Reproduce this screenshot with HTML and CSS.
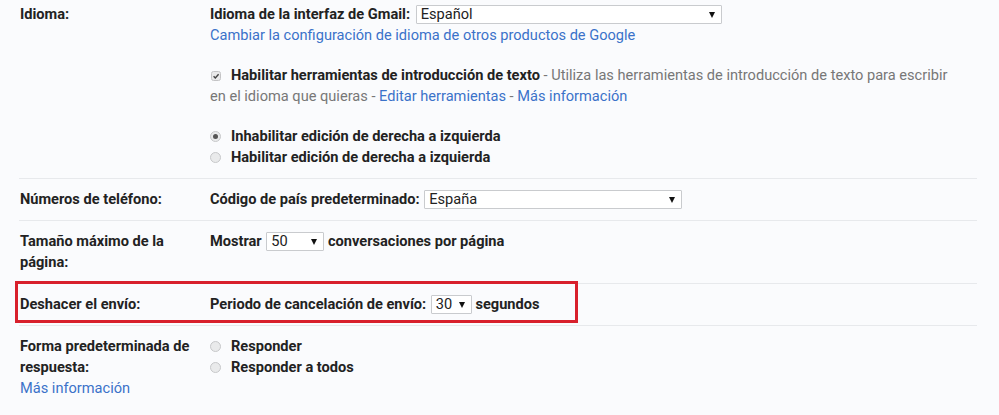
FILE: index.html
```
<!DOCTYPE html>
<html lang="es">
<head>
<meta charset="utf-8">
<title>Configuración</title>
<link rel="stylesheet" href="styles.css">
</head>
<body>
<div class="settings">
  <div class="row row-first">
    <div class="label">Idioma:</div>
    <div class="content">
      <div class="line"><b>Idioma de la interfaz de Gmail:</b> <span class="select select-lang">Español</span></div>
      <div class="line"><a href="#">Cambiar la configuración de idioma de otros productos de Google</a></div>
      <div class="block">
        <span class="check"><svg width="10" height="10" viewBox="0 0 10 10"><rect x="0.5" y="0.5" width="9" height="9" rx="2" fill="#e9e9ea" stroke="#c4c4c6"/><path d="M2.6 5.2 L4.3 6.9 L7.6 3.2" fill="none" stroke="#444" stroke-width="1.4"/></svg></span><b>Habilitar herramientas de introducción de texto</b><span class="muted"> - Utiliza las herramientas de introducción de texto para escribir en el idioma que quieras - </span><a href="#">Editar herramientas</a><span class="muted"> - </span><a href="#">Más información</a>
      </div>
      <div class="block">
        <div class="line"><span class="radio radio-on"></span><b>Inhabilitar edición de derecha a izquierda</b></div>
        <div class="line"><span class="radio"></span><b>Habilitar edición de derecha a izquierda</b></div>
      </div>
    </div>
  </div>
  <div class="row">
    <div class="label">Números de teléfono:</div>
    <div class="content">
      <div class="line"><b>Código de país predeterminado:</b> <span class="select select-country">España</span></div>
    </div>
  </div>
  <div class="row">
    <div class="label">Tamaño máximo de la página:</div>
    <div class="content">
      <div class="line"><b>Mostrar</b> <span class="select select-size">50</span> <b>conversaciones por página</b></div>
    </div>
  </div>
  <div class="row">
    <div class="label">Deshacer el envío:</div>
    <div class="content">
      <div class="line"><b>Periodo de cancelación de envío:</b> <span class="select select-undo">30</span> <b>segundos</b></div>
    </div>
    <div class="highlight"></div>
  </div>
  <div class="row row-last">
    <div class="label">Forma predeterminada de respuesta:<br><a href="#" class="label-link">Más información</a></div>
    <div class="content">
      <div class="line"><span class="radio"></span><b>Responder</b></div>
      <div class="line"><span class="radio"></span><b>Responder a todos</b></div>
    </div>
  </div>
</div>
</body>
</html>
```
FILE: styles.css
```
html, body {
  margin: 0;
  padding: 0;
  background: #fafbfd;
}
body {
  font-family: Roboto, "Liberation Sans", Arial, sans-serif;
  font-size: 14.6px;
  line-height: 21px;
  color: #222;
}
.settings {
  margin-left: 19px;
  width: 958px;
}
.row {
  display: flex;
  padding: 10px 0;
  border-bottom: 1px solid #e7e9ec;
  position: relative;
}
.row-first {
  padding-top: 4px;
}
.row-last {
  border-bottom: none;
}
.label {
  width: 178px;
  flex: none;
  padding-left: 1px;
  padding-right: 12px;
  font-weight: bold;
}
.label-link {
  font-weight: normal;
}
.content {
  flex: 1;
  padding-right: 18px;
}
b {
  font-weight: bold;
}
a {
  color: #3b72c9;
  text-decoration: none;
}
.muted {
  color: #777;
}
.block {
  margin-top: 19px;
}
.select {
  display: inline-block;
  box-sizing: border-box;
  height: 19px;
  line-height: 17px;
  vertical-align: middle;
  margin-top: -2px;
  border: 1px solid #c9cbce;
  border-radius: 1px;
  background: #fff;
  padding: 0 4px;
  position: relative;
  font-weight: normal;
  color: #222;
}
.select::after {
  content: "";
  position: absolute;
  right: 6px;
  top: 6px;
  border-left: 3.5px solid transparent;
  border-right: 3.5px solid transparent;
  border-top: 6px solid #111;
}
.select-lang { width: 306px; margin-left: 2px; }
.select-country { width: 258px; margin-left: 1px; }
.select-size { width: 58px; margin-left: 1px; }
.select-undo { width: 41px; margin-left: 1px; }
.check {
  display: inline-block;
  width: 10px;
  height: 10px;
  margin: 0 10px 0 1px;
  vertical-align: -1px;
}
.check svg {
  display: block;
}
.radio {
  display: inline-block;
  box-sizing: border-box;
  width: 11px;
  height: 11px;
  border-radius: 50%;
  border: 1px solid #c7c8ca;
  background: #e9eaeb;
  margin: 0 10px 0 0;
  vertical-align: -1px;
  position: relative;
}
.radio-on::after {
  content: "";
  position: absolute;
  left: 2px;
  top: 2px;
  width: 5px;
  height: 5px;
  border-radius: 50%;
  background: #555;
}
.highlight {
  position: absolute;
  left: -4px;
  top: -3px;
  width: 563px;
  height: 42px;
  box-sizing: border-box;
  border: 3px solid #d8202c;
  pointer-events: none;
}
```
